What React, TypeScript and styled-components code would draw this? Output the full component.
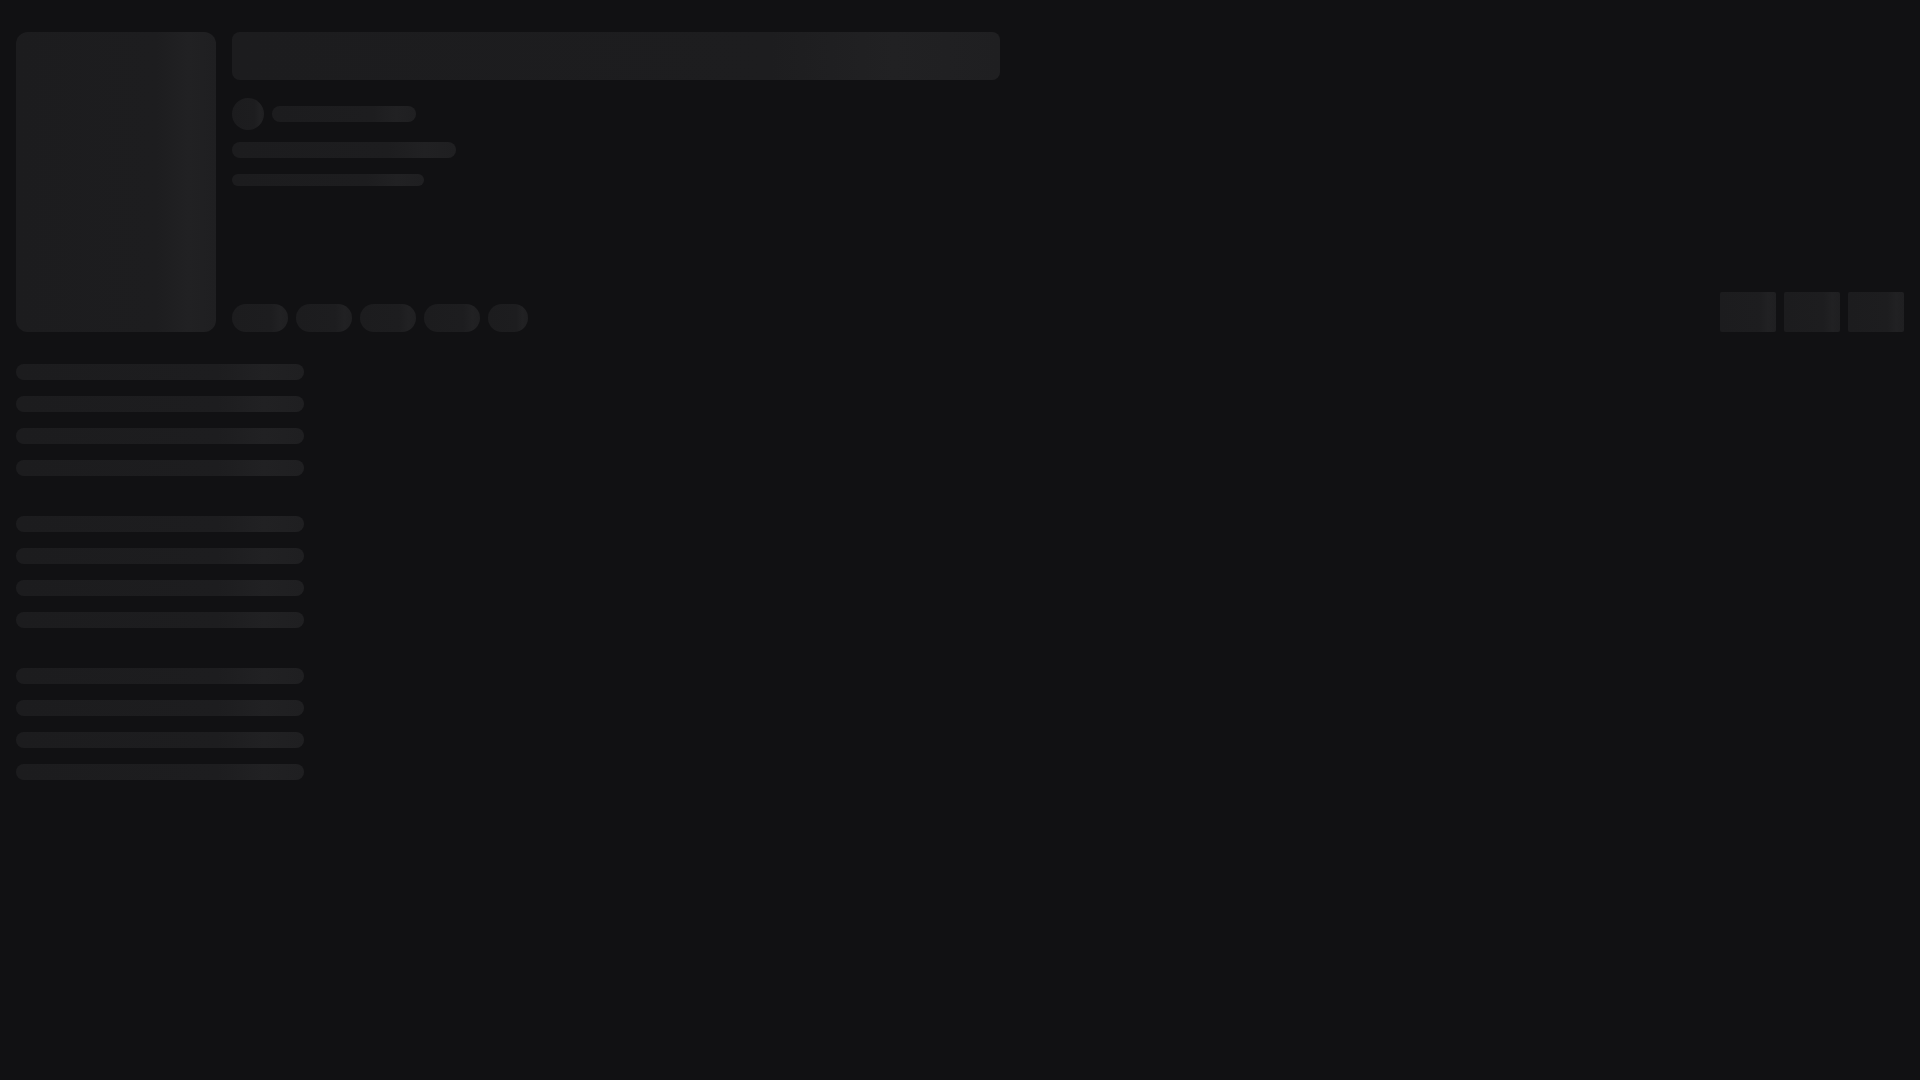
import styled, { createGlobalStyle, css } from "styled-components";

const GlobalStyle = createGlobalStyle`
  html, body {
    margin: 0;
    padding: 0;
    background: #111113;
    font-family: "Inter", "Liberation Sans", sans-serif;
  }
  #root {
    min-height: 100vh;
  }
`;

const shimmer = css`
  background: linear-gradient(
    90deg,
    #1c1c1e 0%,
    #1d1d1f 70%,
    #212123 86%,
    #1f1f21 100%
  );
`;

const Page = styled.div`
  min-height: 100vh;
  padding: 32px 16px;
  box-sizing: border-box;
  background: #111113;
  display: flex;
  flex-direction: column;
  gap: 32px;
`;

const Header = styled.div`
  display: flex;
  gap: 16px;
`;

const Poster = styled.div`
  ${shimmer};
  width: 200px;
  height: 300px;
  flex-shrink: 0;
  border-radius: 12px;
`;

const Info = styled.div`
  flex: 1;
  display: flex;
  flex-direction: column;
`;

const TitleBar = styled.div`
  ${shimmer};
  width: 768px;
  height: 48px;
  border-radius: 8px;
  margin-bottom: 18px;
`;

const AuthorRow = styled.div`
  display: flex;
  align-items: center;
  gap: 8px;
  margin-bottom: 12px;
`;

const Avatar = styled.div`
  ${shimmer};
  width: 32px;
  height: 32px;
  border-radius: 50%;
`;

const Line = styled.div<{ $w: number; $h?: number }>`
  ${shimmer};
  width: ${(p) => p.$w}px;
  height: ${(p) => p.$h ?? 16}px;
  border-radius: 999px;
`;

const Meta = styled.div`
  display: flex;
  flex-direction: column;
  gap: 16px;
`;

const BottomRow = styled.div`
  margin-top: auto;
  display: flex;
  align-items: flex-end;
  justify-content: space-between;
`;

const Tags = styled.div`
  display: flex;
  gap: 8px;
`;

const Tag = styled.div<{ $w: number }>`
  ${shimmer};
  width: ${(p) => p.$w}px;
  height: 28px;
  border-radius: 14px;
`;

const Actions = styled.div`
  display: flex;
  gap: 8px;
`;

const ActionBox = styled.div`
  ${shimmer};
  width: 56px;
  height: 40px;
  border-radius: 2px;
`;

const List = styled.div`
  display: flex;
  flex-direction: column;
  gap: 40px;
`;

const Group = styled.div`
  display: flex;
  flex-direction: column;
  gap: 16px;
`;

const tags = [56, 56, 56, 56, 40];

export default function App() {
  return (
    <>
      <GlobalStyle />
      <Page>
        <Header>
          <Poster />
          <Info>
            <TitleBar />
            <AuthorRow>
              <Avatar />
              <Line $w={144} />
            </AuthorRow>
            <Meta>
              <Line $w={224} />
              <Line $w={192} $h={12} />
            </Meta>
            <BottomRow>
              <Tags>
                {tags.map((w, i) => (
                  <Tag key={i} $w={w} />
                ))}
              </Tags>
              <Actions>
                <ActionBox />
                <ActionBox />
                <ActionBox />
              </Actions>
            </BottomRow>
          </Info>
        </Header>
        <List>
          {[0, 1, 2].map((g) => (
            <Group key={g}>
              {[0, 1, 2, 3].map((r) => (
                <Line key={r} $w={288} />
              ))}
            </Group>
          ))}
        </List>
      </Page>
    </>
  );
}
